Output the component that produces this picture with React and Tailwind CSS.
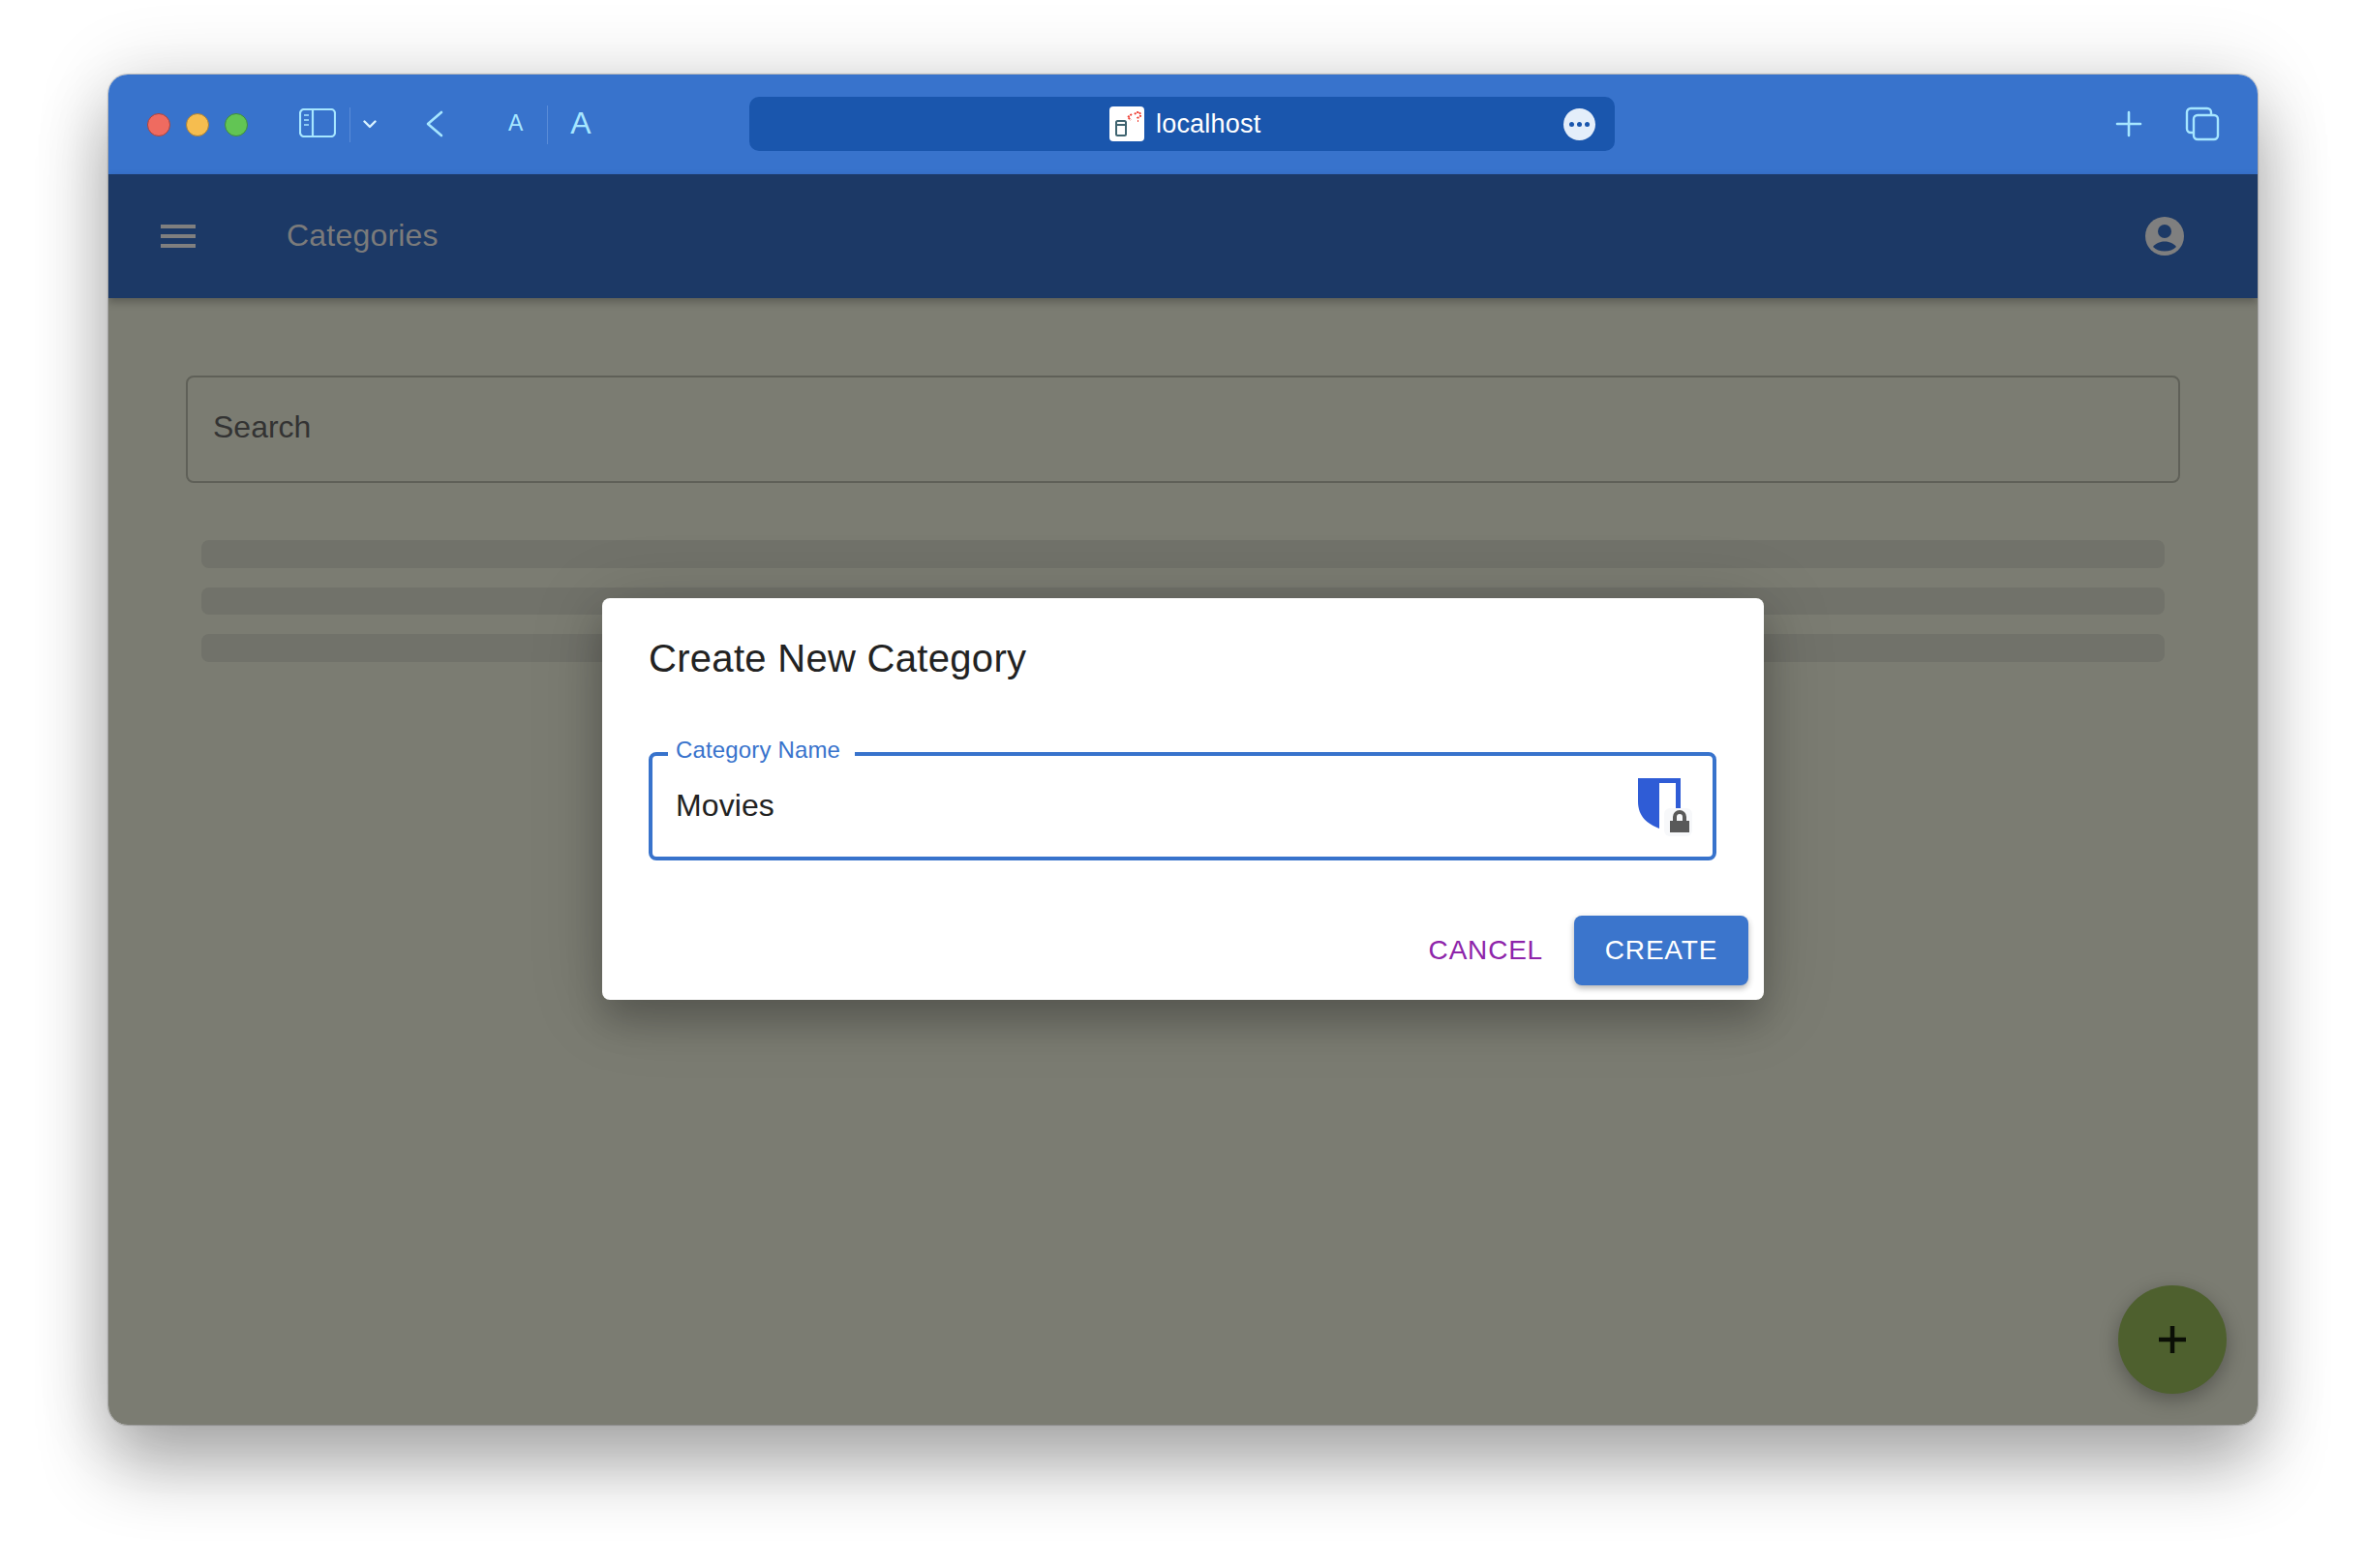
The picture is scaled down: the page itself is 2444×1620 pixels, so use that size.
const ICON = '#a6e6ff';

function TrafficLight({ color, border }) {
  return <span className={`w-6 h-6 rounded-full border ${color} ${border}`} />;
}

function Skeleton() {
  return <div className="h-[28.5px] rounded-lg bg-[#71726a]" />;
}

function Favicon() {
  return (
    <div className="w-9 h-9 rounded bg-white flex items-center justify-center">
      <svg viewBox="0 0 36 36" className="w-9 h-9" fill="none">
        <rect x="7" y="15" width="10" height="15" rx="1.5" stroke="#3f6470" strokeWidth="2" />
        <path d="M7 19h10" stroke="#3f6470" strokeWidth="2" />
        <path d="M23 8l-4 3 3 3M26 8l2-2h3l1 2v2l-3 2v1M29 15h1" stroke="#ef4136" strokeWidth="2" strokeDasharray="2 1" />
      </svg>
    </div>
  );
}

function TitleBar() {
  return (
    <div className="h-[103px] shrink-0 bg-[#3873cc] flex items-center pl-[40px] pr-[39px] relative">
      <div className="flex gap-4 items-center">
        <TrafficLight color="bg-[#ef6b60]" border="border-[#a8443f]" />
        <TrafficLight color="bg-[#f6bd4f]" border="border-[#a67f3a]" />
        <TrafficLight color="bg-[#62c554]" border="border-[#3f8a3f]" />
      </div>

      <svg viewBox="0 0 38 30" className="w-[38px] h-[30px] ml-[53px] mb-[3px]" fill="none" stroke={ICON} strokeWidth="2.2">
        <rect x="1" y="1" width="36" height="28" rx="4" />
        <path d="M14 1v28" />
        <path d="M5 7h5M5 12h5M5 17h5" strokeWidth="1.6" />
      </svg>
      <div className="w-px h-9 bg-[#5a8cd8] ml-[14px]" />
      <svg viewBox="0 0 14 9" className="w-[14px] h-[9px] ml-[13px]" fill="none" stroke="#d9f3ff" strokeWidth="2.4" strokeLinecap="round" strokeLinejoin="round">
        <path d="M1.500 1.500L7 7l5.500-5.500" />
      </svg>
      <svg viewBox="0 0 18 28" className="w-[18px] h-[28px] ml-[51px] mb-[2px]" fill="none" stroke={ICON} strokeWidth="2.6" strokeLinecap="round" strokeLinejoin="round">
        <path d="M16 2L2 14l14 12" />
      </svg>
      <span className="ml-[67px] pb-[2px] text-[23px] leading-none text-[#a6e6ff] font-['Liberation_Sans',sans-serif]">A</span>
      <div className="w-px h-10 bg-[#5a8cd8] ml-[25px]" />
      <span className="ml-[23px] pb-[3px] text-[32px] leading-none text-[#a6e6ff] font-['Liberation_Sans',sans-serif]">A</span>

      <div className="absolute left-[662px] top-[23px] w-[894px] h-[56px] rounded-[10px] bg-[#1a56ad] flex items-center">
        <div className="ml-[372px]"><Favicon /></div>
        <span className="ml-[12px] text-[27px] tracking-[0.2px] leading-none text-white font-['Liberation_Sans',sans-serif]">localhost</span>
        <div className="ml-auto mr-[20px] w-[33px] h-[33px] rounded-full bg-[#e4eefa] flex items-center justify-center gap-[3px]">
          <span className="w-[5px] h-[5px] rounded-full bg-[#1a56ad]" />
          <span className="w-[5px] h-[5px] rounded-full bg-[#1a56ad]" />
          <span className="w-[5px] h-[5px] rounded-full bg-[#1a56ad]" />
        </div>
      </div>

      <div className="ml-auto flex items-center gap-[44px] mb-[2px]">
        <svg viewBox="0 0 28 28" className="w-7 h-7" fill="none" stroke={ICON} strokeWidth="2.6" strokeLinecap="round">
          <path d="M14 2v24M2 14h24" />
        </svg>
        <svg viewBox="0 0 36 36" className="w-9 h-9" fill="none" stroke={ICON} strokeWidth="2.4">
          <path d="M8 27H6a4 4 0 0 1-4-4V6a4 4 0 0 1 4-4h17a4 4 0 0 1 4 4v3" />
          <rect x="9" y="9" width="25" height="25" rx="4" />
        </svg>
      </div>
    </div>
  );
}

function AppBar() {
  return (
    <div className="h-[128px] shrink-0 bg-[#1c3966] flex items-center pl-[54px] pr-[76px] shadow-[0_4px_8px_rgba(0,0,0,0.25)] relative">
      <div className="flex flex-col gap-[6px]">
        <span className="w-9 h-1 bg-[#7f7f7f]" />
        <span className="w-9 h-1 bg-[#7f7f7f]" />
        <span className="w-9 h-1 bg-[#7f7f7f]" />
      </div>
      <span className="ml-[94px] pb-[2px] text-[32px] tracking-[0.2px] text-[#7b7b7b] font-['Liberation_Sans',sans-serif]">Categories</span>
      <svg viewBox="0 0 40 40" className="ml-auto w-10 h-10">
        <circle cx="20" cy="20" r="20" fill="#7f7f7f" />
        <circle cx="20" cy="15" r="7" fill="#1c3966" />
        <path d="M8 31c3-4 8-5.500 12-5.500s9 1.500 12 5.500c-3 3-7 4.500-12 4.500S11 34 8 31z" fill="#1c3966" />
      </svg>
    </div>
  );
}

function Dialog() {
  return (
    <div className="absolute left-[510px] top-[541px] w-[1200px] h-[415px] rounded-lg bg-white shadow-[0_22px_36px_rgba(0,0,0,0.2),0_8px_76px_rgba(0,0,0,0.18)] pt-[38px] px-[48px] flex flex-col font-['Liberation_Sans',sans-serif]">
      <h2 className="text-[40px] leading-[48px] tracking-[0.3px] text-[#222222]">Create New Category</h2>

      <div className="relative mt-[73px] h-[112px] w-[1103px] rounded-lg border-4 border-[#3873cc] flex items-center pl-6 pr-4 shrink-0">
        <span className="absolute left-[16px] -top-[20px] pl-[8px] pr-[15px] bg-white text-[24px] leading-[28px] tracking-[0.15px] text-[#3873cc]">Category Name</span>
        <span className="pb-[2px] text-[32px] tracking-[0.1px] text-[#222222]">Movies</span>
        <div className="absolute left-[1018px] top-[23px] w-[57px] h-[60px]">
          <svg viewBox="0 0 57 60" className="w-[57px] h-[60px]">
            <path d="M0 0h44v40H22v12C10 47 0 40 0 24z" fill="#2f5cd6" />
            <path d="M22 5h17v35H22z" fill="#ffffff" />
            <rect x="27" y="31" width="29" height="29" rx="6" fill="#f7f8fa" />
            <path d="M36 44v-4a7 7 0 0 1 14 0v4h3v12H33V44zm4 0h6v-4a3 3 0 0 0-6 0z" fill="#595959" />
          </svg>
        </div>
      </div>

      <div className="mt-auto mb-[15px] -mr-[32px] flex items-center justify-end gap-[32px] text-[28px] tracking-[0.8px]">
        <span className="text-[#8e24aa]">CANCEL</span>
        <span className="w-[180px] h-[72px] rounded-lg bg-[#3b75cc] text-white flex items-center justify-center shadow-[0_3px_6px_rgba(0,0,0,0.3)]">CREATE</span>
      </div>
    </div>
  );
}

export default function App() {
  return (
    <div className="w-[2444px] h-[1620px] bg-white overflow-hidden pt-[77px] pl-[112px]">
      <div className="relative w-[2220px] h-[1395px] rounded-[20px] overflow-hidden flex flex-col shadow-[0_0_1px_1px_rgba(0,0,0,0.2),0_44px_72px_rgba(0,0,0,0.3),0_0_80px_rgba(0,0,0,0.14)]">
        <TitleBar />
        <AppBar />
        <div className="flex-1 bg-[#7b7c72] px-[80px] pt-[80px] font-['Liberation_Sans',sans-serif]">
          <div className="h-[111px] rounded-lg border-2 border-[#5f6058] flex items-center px-[26px] pb-[5px] text-[32px] text-[#333333]">Search</div>
          <div className="mt-[59px] mx-[16px] flex flex-col gap-[20px]">
            <Skeleton />
            <Skeleton />
            <Skeleton />
          </div>
        </div>
        <Dialog />
        <button className="absolute left-[2076px] top-[1251px] w-[112px] h-[112px] rounded-full bg-[#4e602e] flex items-center justify-center shadow-[0_6px_20px_rgba(0,0,0,0.3)]">
          <svg viewBox="0 0 28 28" className="w-7 h-7" fill="none" stroke="#0b0f06" strokeWidth="4.500">
            <path d="M14 0v28M0 14h28" />
          </svg>
        </button>
      </div>
    </div>
  );
}
